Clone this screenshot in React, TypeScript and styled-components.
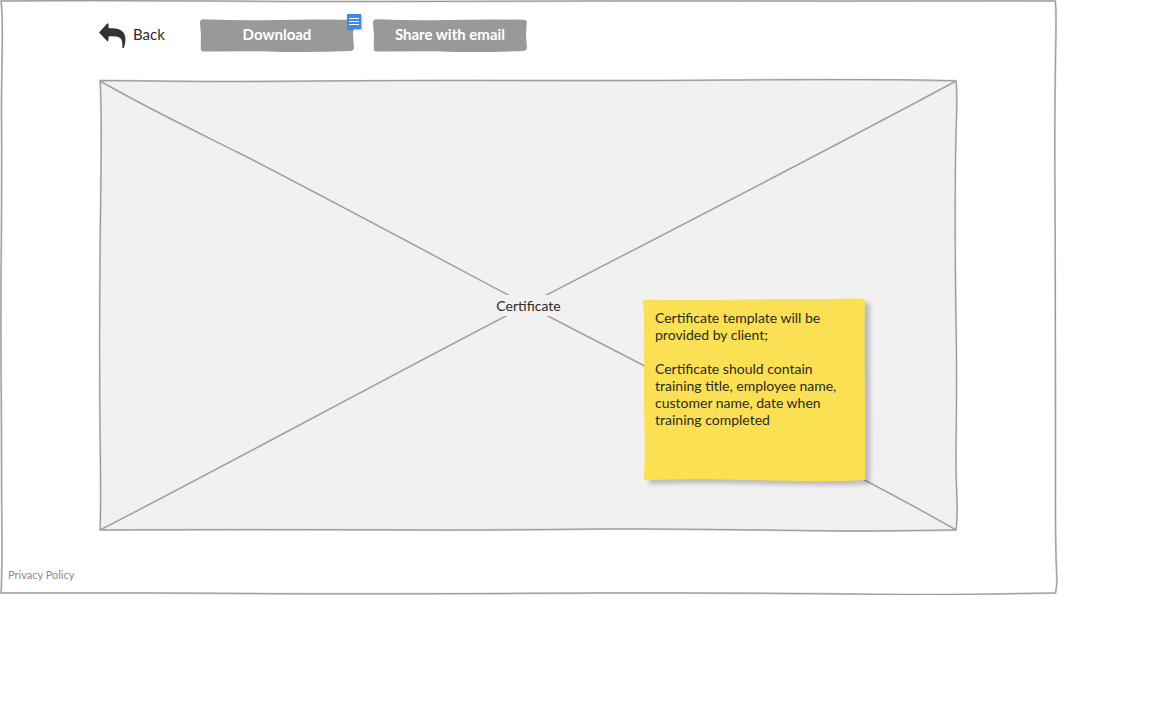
import React from "react";
import styled, { createGlobalStyle, css } from "styled-components";

const GlobalStyle = createGlobalStyle`
  * { box-sizing: border-box; }
  body {
    margin: 0;
    background: #ffffff;
    color: #2b2b2b;
    font-family: Lato, "Open Sans", "Liberation Sans", sans-serif;
    font-size: 14px;
    line-height: 17px;
  }
`;

const Screen = styled.main`
  position: relative;
  margin-right: 106px;
  padding: 19px 0 12px;
`;

const Sketch = styled.svg`
  position: absolute;
  inset: 0;
  width: 100%;
  height: 100%;
  overflow: visible;
  pointer-events: none;
`;

const Toolbar = styled.header`
  position: relative;
  display: flex;
  align-items: center;
  gap: 19px;
  margin: 0 99px 27px;
`;

const BackLink = styled.a`
  display: flex;
  align-items: center;
  gap: 7px;
  width: 82px;
  height: 33px;
  padding-bottom: 3px;
  color: #2b2b2b;
  font-size: 15px;
  text-decoration: none;

  svg {
    margin-top: 3px;
  }
`;

const ActionSlot = styled.div`
  position: relative;
  width: 154px;
`;

const ActionButton = styled.button`
  position: relative;
  width: 100%;
  height: 33px;
  padding: 0 0 3px;
  border: 0;
  background: none;
  color: #ffffff;
  font-family: inherit;
  font-size: 15px;
  font-weight: 700;
  cursor: pointer;
`;

const ButtonLabel = styled.span`
  position: relative;
`;

const CommentMarker = styled.button`
  position: absolute;
  top: -5px;
  right: -7px;
  display: flex;
  width: 14px;
  height: 15px;
  padding: 0;
  border: 0;
  background: #4189dd;
  box-shadow: 1px 1px 2px rgba(0, 0, 0, 0.3);
`;

const Placeholder = styled.section`
  position: relative;
  display: flex;
  align-items: center;
  justify-content: center;
  margin: 0 99px;
  aspect-ratio: 859 / 452;
`;

const PlaceholderLabel = styled.span`
  position: relative;
  padding: 2px 0;
  background: #f1f1f1;
`;

const Note = styled.aside`
  position: absolute;
  right: 92px;
  bottom: 50px;
  width: 223px;
  height: 183px;
  padding: 11px 12px;
`;

const NoteShape = styled(Sketch)`
  filter: drop-shadow(5px 4px 2px rgba(0, 0, 0, 0.22));
`;

const NoteText = styled.p<{ $spaced?: boolean }>`
  position: relative;
  margin: 0;
  ${({ $spaced }) =>
    $spaced &&
    css`
      margin-top: 17px;
    `}
`;

const Footer = styled.footer`
  position: relative;
  padding: 36px 8px 0;
  font-size: 11px;
  line-height: 16px;
`;

const FooterLink = styled.a`
  color: #8a8a8a;
  text-decoration: none;
`;

function SketchOutline({ d, box, fill }: { d: string; box: string; fill: string }) {
  return (
    <Sketch viewBox={box} preserveAspectRatio="none" aria-hidden="true">
      <path d={d} fill={fill} stroke="#cccccc" strokeWidth="2" vectorEffect="non-scaling-stroke" />
      <path d={d} fill="none" stroke="#8c8c8c" strokeWidth="0.8" vectorEffect="non-scaling-stroke" />
    </Sketch>
  );
}

function ButtonShape() {
  return (
    <Sketch viewBox="0 0 154 33" preserveAspectRatio="none" aria-hidden="true">
      <path
        d="M3 0.3 Q40 1.800 75 1 T151 0.800 Q154 1 153.700 4 L153 16 L154 29 Q153.500 32 150 32 Q104 34 62 32.200 L3 32.500 Q0.500 32 0.700 29 L1 17 L0 4 Q0 0.500 3 0.300Z"
        fill="#999999"
      />
    </Sketch>
  );
}

function BackArrow() {
  return (
    <svg width="27" height="26" viewBox="0 0 27 26" aria-hidden="true">
      <path
        d="M0 9.500 L8.500 0.300 L9.500 1 L9.700 5.300 C16 5 21 5.500 24 9 C27 12.500 27.300 18 24.700 25.300 L23.200 24.500 C24 17 22 14.500 17 13.600 L9.700 13.300 L9.300 17.800 L8.500 18.500Z"
        fill="#333333"
      />
    </svg>
  );
}

export default function App() {
  return (
    <>
      <GlobalStyle />
      <Screen>
        <SketchOutline
          box="0 0 1057 595"
          fill="#ffffff"
          d="M1 1 C100 0 180 1 300 1.500 S600 0.500 750 1 S980 0.500 1055.300 1 C1056.500 10 1056 30 1055.500 60 S1054.500 130 1055 200 S1055.800 380 1055.500 490 S1059 570 1055.500 593 C1010 593.500 960 595 900 594.500 S720 592.500 600 593 S350 594.500 250 593.500 S60 593 1 593 C3 560 1.500 520 1.500 460 S0.500 340 1 280 S2 160 1.500 120 S4 20 1 1Z"
        />
        <Toolbar>
          <BackLink href="#back">
            <BackArrow />
            Back
          </BackLink>
          <ActionSlot>
            <ActionButton type="button">
              <ButtonShape />
              <ButtonLabel>Download</ButtonLabel>
            </ActionButton>
            <CommentMarker type="button" aria-label="Show comment">
              <svg width="14" height="15" viewBox="0 0 14 15" aria-hidden="true">
                <path d="M2 4.500H12M2 7.500H12M2 10.500H12" stroke="#ffffff" />
              </svg>
            </CommentMarker>
          </ActionSlot>
          <ActionSlot>
            <ActionButton type="button">
              <ButtonShape />
              <ButtonLabel>Share with email</ButtonLabel>
            </ActionButton>
          </ActionSlot>
        </Toolbar>
        <Placeholder>
          <SketchOutline
            box="0 0 859 452"
            fill="#f1f1f1"
            d="M1 1.500 C60 2 90 2.500 130 2.500 S300 1 400 1.500 S560 1.500 640 1 S800 0 857 1.800 C859 20 857 40 856.500 80 S856 180 857 240 S857.500 320 857 370 S860 425 857 451 C810 451.500 770 452.500 720 451.800 S560 449.500 500 450 S380 451.500 320 451 S100 450.500 1 451 C2.500 420 1 370 0.800 320 S0.500 240 1 180 S3.500 30 1 1.500Z"
          />
          <Sketch viewBox="0 0 859 452" preserveAspectRatio="none" aria-hidden="true">
            <path
              d="M1 2 C50 30 90 49 140 74 S330 174 430 227 S770 400 857 451 M857 2 C770 49 560 158 430 225 S120 390 1 451"
              fill="none"
              stroke="#a0a0a0"
              strokeWidth="1.500"
              vectorEffect="non-scaling-stroke"
            />
          </Sketch>
          <PlaceholderLabel>Certificate</PlaceholderLabel>
          <Note>
            <NoteShape viewBox="0 0 223 183" preserveAspectRatio="none" aria-hidden="true">
              <path
                d="M0 1.500 C40 2.500 70 2 110 1.500 S180 1.500 212 0.500 Q218 0 222 2 C221 60 223 120 222 182 C190 184 150 183 110 182 S40 181 1 182 C2.500 150 1 120 1 90 S2 30 0 1.500Z"
                fill="#fae052"
              />
            </NoteShape>
            <NoteText>Certificate template will be provided by client;</NoteText>
            <NoteText $spaced>
              Certificate should contain training title, employee name, customer name, date when
              training completed
            </NoteText>
          </Note>
        </Placeholder>
        <Footer>
          <FooterLink href="#privacy">Privacy Policy</FooterLink>
        </Footer>
      </Screen>
    </>
  );
}
